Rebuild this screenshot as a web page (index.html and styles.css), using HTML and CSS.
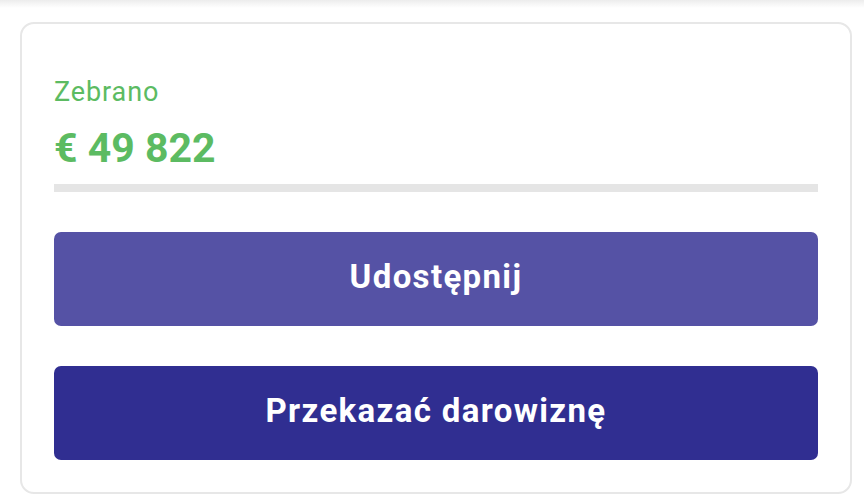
FILE: index.html
```html
<!DOCTYPE html>
<html lang="pl">
<head>
<meta charset="utf-8">
<link rel="stylesheet" href="styles.css">
</head>
<body>
<div class="topbar"></div>
<div class="card">
  <div class="label">Zebrano</div>
  <div class="amount">€ 49 822</div>
  <div class="progress"><div class="progress-fill" style="width:0%"></div></div>
  <button class="btn btn-share">Udostępnij</button>
  <button class="btn btn-donate">Przekazać darowiznę</button>
</div>
</body>
</html>
```
FILE: styles.css
```css
* { box-sizing: border-box; }
html, body { margin: 0; padding: 0; background: #ffffff; }
body {
  font-family: Roboto, "Liberation Sans", sans-serif;
  width: 864px;
  height: 504px;
  overflow: hidden;
}
.topbar {
  height: 8px;
  background: linear-gradient(to bottom, #ececec 0%, #f6f6f6 50%, #ffffff 100%);
}
.card {
  margin: 14px 0 0 20px;
  width: 832px;
  border: 2px solid #e7e7e7;
  border-radius: 14px;
  padding: 53px 32px 32px 32px;
  display: flex;
  flex-direction: column;
}
.label {
  color: #5cbb62;
  font-size: 27px;
  line-height: 30px;
  font-weight: 400;
  letter-spacing: 0.9px;
}
.amount {
  color: #5cbb62;
  font-size: 41px;
  line-height: 48px;
  font-weight: 700;
  margin-top: 17px;
}
.progress {
  margin-top: 12px;
  height: 8px;
  background: #e5e5e5;
}
.progress-fill { height: 100%; background: #5cbb62; }
.btn {
  display: flex;
  align-items: center;
  justify-content: center;
  height: 94px;
  border: none;
  border-radius: 7px;
  color: #ffffff;
  font-family: Roboto, "Liberation Sans", sans-serif;
  font-weight: 700;
  font-size: 33px;
  line-height: 40px;
  letter-spacing: 1.35px;
  padding: 0 0 4px 0;
  width: 100%;
}
.btn-share {
  margin-top: 40px;
  background: #5552a5;
}
.btn-donate {
  margin-top: 40px;
  background: #302e91;
}
```
